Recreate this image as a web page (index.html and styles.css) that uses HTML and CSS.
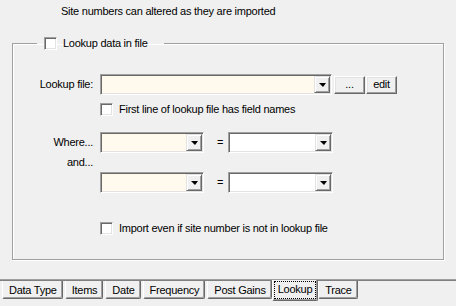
FILE: index.html
```html
<!DOCTYPE html>
<html>
<head>
<meta charset="utf-8">
<link rel="stylesheet" href="styles.css">
</head>
<body>
<div class="note">Site numbers can altered as they are imported</div>
<fieldset class="group">
  <legend class="group-title"><span class="check"></span><span>Lookup data in file</span></legend>
  <div class="row row-file">
    <span class="label">Lookup file:</span>
    <div class="combo cream wide"><span class="combo-btn"><span class="arrow"></span></span></div>
    <button class="btn btn-dots">...</button>
    <button class="btn btn-edit">edit</button>
  </div>
  <div class="row row-check1 indent"><span class="check"></span><span>First line of lookup file has field names</span></div>
  <div class="row row-where">
    <span class="label">Where...</span>
    <div class="combo cream left"><span class="combo-btn"><span class="arrow"></span></span></div>
    <span class="eq">=</span>
    <div class="combo right"><span class="combo-btn"><span class="arrow"></span></span></div>
  </div>
  <div class="row row-and"><span class="label">and...</span></div>
  <div class="row row-and2 indent">
    <div class="combo cream left"><span class="combo-btn"><span class="arrow"></span></span></div>
    <span class="eq">=</span>
    <div class="combo right"><span class="combo-btn"><span class="arrow"></span></span></div>
  </div>
  <div class="row row-check2 indent"><span class="check"></span><span>Import even if site number is not in lookup file</span></div>
</fieldset>
<div class="tabs">
  <div class="tab">Data Type</div>
  <div class="tab">Items</div>
  <div class="tab">Date</div>
  <div class="tab">Frequency</div>
  <div class="tab">Post Gains</div>
  <div class="tab active"><span class="focus">Lookup</span></div>
  <div class="tab">Trace</div>
</div>
</body>
</html>
```
FILE: styles.css
```css
html, body {
  margin: 0;
  padding: 0;
  background: #f0f0f0;
}
body {
  width: 456px;
  height: 306px;
  overflow: hidden;
  font-family: "Liberation Sans", Arial, sans-serif;
  font-size: 11px;
  letter-spacing: -0.25px;
  line-height: 13px;
  color: #000;
}
.note {
  padding: 5px 0 0 61px;
  height: 13px;
}
.group {
  margin: 19px 12px 0;
  padding: 0 0 24px;
  border: 1px solid #a0a0a0;
  box-shadow: 1px 1px 0 #fff, inset 1px 1px 0 #fff;
  min-width: 0;
}
.group-title {
  margin-left: 24px;
  padding: 0 16px 0 7px;
  display: flex;
  align-items: center;
  gap: 6px;
  height: 13px;
}
.check {
  display: inline-block;
  width: 13px;
  height: 13px;
  box-sizing: border-box;
  background: #fff;
  border-top: 1px solid #a0a0a0;
  border-left: 1px solid #a0a0a0;
  border-right: 1px solid #fff;
  border-bottom: 1px solid #fff;
  box-shadow: inset 1px 1px 0 #696969, inset -1px -1px 0 #e3e3e3;
  flex: none;
}
.row {
  display: flex;
  align-items: center;
}
.indent {
  padding-left: 87px;
}
.row .check + span {
  margin-left: 6px;
}
.label {
  width: 80px;
  margin-right: 7px;
  text-align: right;
  flex: none;
}
.row-file { margin-top: 24px; }
.row-check1 { margin-top: 8px; }
.row-where { margin-top: 16px; }
.row-and { margin-top: 3px; }
.row-and2 { margin-top: 3px; }
.row-check2 { margin-top: 29px; }

.combo {
  box-sizing: border-box;
  height: 21px;
  background: #fff;
  border-top: 1px solid #a0a0a0;
  border-left: 1px solid #a0a0a0;
  border-right: 1px solid #fff;
  border-bottom: 1px solid #fff;
  box-shadow: inset 1px 1px 0 #696969, inset -1px -1px 0 #e3e3e3;
  padding: 1px;
  display: flex;
  justify-content: flex-end;
  flex: none;
}
.cream { background: #fff9ee; }
.wide { width: 232px; }
.left { width: 104px; }
.right { width: 105px; }
.combo-btn {
  box-sizing: border-box;
  width: 16px;
  height: 17px;
  background: #f0f0f0;
  border-top: 1px solid #e3e3e3;
  border-left: 1px solid #e3e3e3;
  border-right: 1px solid #696969;
  border-bottom: 1px solid #696969;
  box-shadow: inset 1px 1px 0 #fff, inset -1px -1px 0 #a0a0a0;
  display: flex;
  align-items: center;
  justify-content: center;
}
.arrow {
  width: 0;
  height: 0;
  border-left: 4px solid transparent;
  border-right: 3px solid transparent;
  border-top: 4px solid #000;
  margin-top: 1px;
}
.eq {
  width: 24px;
  box-sizing: border-box;
  padding-left: 13px;
  flex: none;
}
.btn {
  box-sizing: border-box;
  width: 31px;
  height: 18px;
  margin: 0 0 0 2px;
  padding: 0 0 1px;
  font: inherit;
  letter-spacing: inherit;
  color: #000;
  background: #f0f0f0;
  border-top: 1px solid #fff;
  border-left: 1px solid #fff;
  border-right: 1px solid #696969;
  border-bottom: 1px solid #696969;
  box-shadow: inset -1px -1px 0 #a0a0a0, inset 1px 1px 0 #e3e3e3;
  flex: none;
}
.btn-dots { margin-left: 2px; }
.btn-edit { margin-left: 1px; }

.tabs {
  margin-top: 20px;
  border-top: 1px solid #808080;
  box-shadow: 0 -1px 0 #a0a0a0;
  display: flex;
  align-items: flex-start;
  padding-left: 2px;
}
.tab {
  box-sizing: border-box;
  height: 18px;
  padding: 3px 5px 0 6px;
  border-left: 1px solid #fff;
  border-right: 1px solid #696969;
  border-bottom: 1px solid #696969;
  box-shadow: inset -1px -1px 0 #a0a0a0;
  border-radius: 0 0 2px 2px;
  margin-right: 2px;
  white-space: nowrap;
}
.tab.active {
  position: relative;
  margin: -1px 0 0 -2px;
  height: 21px;
  padding: 2px 2px 0 2px;
  background: #f0f0f0;
}
.focus {
  display: inline-block;
  outline: 1px dotted #000;
  padding: 1px 3px 2px;
}
```
